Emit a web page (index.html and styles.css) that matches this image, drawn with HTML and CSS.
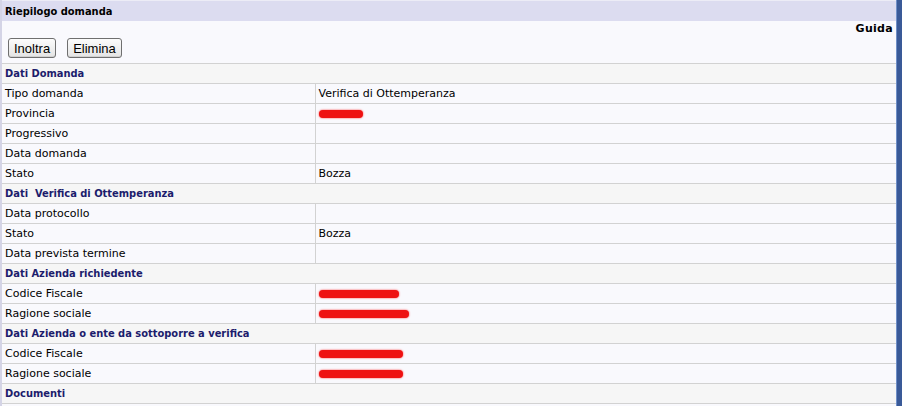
FILE: index.html
```html
<!DOCTYPE html>
<html lang="it">
<head>
    <meta charset="UTF-8">
    <title>Riepilogo domanda</title>
    <link rel="stylesheet" href="styles.css">
</head>
<body>
    <div class="page">
        <div class="main">
            <div class="title-bar">Riepilogo domanda</div>
            <div class="help-row"><a class="help-link">Guida</a></div>
            <div class="toolbar">
                <button class="btn">Inoltra</button>
                <button class="btn">Elimina</button>
            </div>

            <table class="summary">
                <tr class="section"><td colspan="2">Dati Domanda</td></tr>
                <tr><td class="label">Tipo domanda</td><td class="value">Verifica di Ottemperanza</td></tr>
                <tr><td class="label">Provincia</td><td class="value"><span class="redact" style="width:44px"></span></td></tr>
                <tr><td class="label">Progressivo</td><td class="value"></td></tr>
                <tr><td class="label">Data domanda</td><td class="value"></td></tr>
                <tr><td class="label">Stato</td><td class="value">Bozza</td></tr>

                <tr class="section"><td colspan="2">Dati&nbsp; Verifica di Ottemperanza</td></tr>
                <tr><td class="label">Data protocollo</td><td class="value"></td></tr>
                <tr><td class="label">Stato</td><td class="value">Bozza</td></tr>
                <tr><td class="label">Data prevista termine</td><td class="value"></td></tr>

                <tr class="section"><td colspan="2">Dati Azienda richiedente</td></tr>
                <tr><td class="label">Codice Fiscale</td><td class="value"><span class="redact" style="width:80px"></span></td></tr>
                <tr><td class="label">Ragione sociale</td><td class="value"><span class="redact" style="width:90px"></span></td></tr>

                <tr class="section"><td colspan="2">Dati Azienda o ente da sottoporre a verifica</td></tr>
                <tr><td class="label">Codice Fiscale</td><td class="value"><span class="redact" style="width:84px"></span></td></tr>
                <tr><td class="label">Ragione sociale</td><td class="value"><span class="redact" style="width:84px"></span></td></tr>

                <tr class="section"><td colspan="2">Documenti</td></tr>
            </table>
        </div>
        <div class="frame-edge"></div>
    </div>
</body>
</html>
```

FILE: styles.css
```css
* {
    margin: 0;
    padding: 0;
    box-sizing: border-box;
}

body {
    font-family: 'DejaVu Sans', Verdana, sans-serif;
    font-size: 11px;
    color: #000;
    background: #f9f9fd;
}

.page {
    display: flex;
    height: 406px;
}

.main {
    flex: 1;
    border-left: 2px solid #d4d4e6;
    background: #f9f9fd;
}

.title-bar {
    height: 21px;
    line-height: 22px;
    padding-left: 3px;
    font-family: 'DejaVu Sans Condensed', 'DejaVu Sans', sans-serif;
    font-stretch: condensed;
    font-weight: bold;
    background: #dcdcf0;
    border-top: 1px solid #ececf6;
}

.help-row {
    height: 16px;
    text-align: right;
    padding-right: 3px;
    line-height: 16px;
}

.help-link {
    font-weight: bold;
    color: #000;
    letter-spacing: 0.3px;
}

.toolbar {
    display: flex;
    gap: 11px;
    height: 26px;
    padding: 1px 0 0 6px;
}

.btn {
    font-family: 'Liberation Sans', Arial, sans-serif;
    font-size: 13px;
    height: 20px;
    padding: 0 5px;
    color: #000;
    background: linear-gradient(#fcfcfc, #e4e4e4);
    border: 1px solid #6f6f6f;
    border-radius: 3px;
    box-shadow: inset 0 -1px 0 #d0d0d0;
}

.summary {
    width: 100%;
    border-collapse: collapse;
    border-top: 1px solid #d2d2d2;
}

.summary td {
    height: 20px;
    padding: 0 3px;
    border-bottom: 1px solid #d2d2d2;
    white-space: nowrap;
}

.summary .label {
    width: 313px;
    border-right: 1px solid #d2d2d2;
}

.summary .value {
    padding-left: 3px;
}

.section td {
    background: #f6f6f6;
    color: #1c1c6c;
    font-family: 'DejaVu Sans Condensed', 'DejaVu Sans', sans-serif;
    font-stretch: condensed;
    font-weight: bold;
}

.redact {
    display: inline-block;
    height: 8px;
    vertical-align: middle;
    background: #ee1111;
    border-radius: 4px;
    box-shadow: 0 0 2px #ff3030;
}

.frame-edge {
    width: 6px;
    background: #3a5a98;
    border-left: 1px solid #6f8fc8;
}
```
